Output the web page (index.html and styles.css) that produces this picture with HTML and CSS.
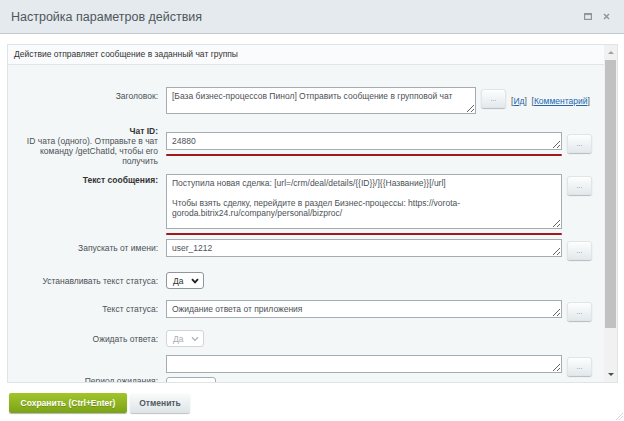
FILE: index.html
```html
<!DOCTYPE html>
<html lang="ru">
<head>
    <meta charset="UTF-8">
    <meta name="viewport" content="width=device-width, initial-scale=1.0">
    <title>Настройка параметров действия</title>
    <link rel="stylesheet" href="styles.css">
</head>
<body>
    <div class="dialog">
        <div class="titlebar">
            <span class="title">Настройка параметров действия</span>
            <span class="tools">
                <svg width="8" height="7" viewBox="0 0 8 7"><rect x="0.6" y="0.6" width="6.8" height="5.8" fill="none" stroke="#8c959b" stroke-width="1.2"/><line x1="0.6" y1="1.6" x2="7.4" y2="1.6" stroke="#8c959b" stroke-width="1"/></svg>
                <svg width="7" height="7" viewBox="0 0 7 7"><path d="M1 1 L6 6 M6 1 L1 6" stroke="#8c959b" stroke-width="1.4"/></svg>
            </span>
        </div>

        <div class="dialog-body">
            <div class="panel">
                <div class="panel-scroll">
                    <div class="panel-head">Действие отправляет сообщение в заданный чат группы</div>
                    <div class="form">
                        <div class="row">
                            <div class="label">Заголовок:</div>
                            <div class="field">
                                <textarea class="input input-title">[База бизнес-процессов Пинол] Отправить сообщение в групповой чат</textarea>
                                <button class="dots-btn">...</button>
                                <span class="links">[<a href="#">Ид</a>] &nbsp;[<a href="#">Комментарий</a>]</span>
                            </div>
                        </div>

                        <div class="row row-center">
                            <div class="label"><b>Чат ID:</b><br>ID чата (одного). Отправьте в чат команду /getChatId, чтобы его получить</div>
                            <div class="field">
                                <div class="marked">
                                    <textarea class="input">24880</textarea>
                                    <div class="redline"></div>
                                </div>
                                <button class="dots-btn">...</button>
                            </div>
                        </div>

                        <div class="row">
                            <div class="label label-top"><b>Текст сообщения:</b></div>
                            <div class="field">
                                <div class="marked">
                                    <textarea class="input input-big">Поступила новая сделка: [url=/crm/deal/details/{{ID}}/]{{Название}}[/url]

Чтобы взять сделку, перейдите в раздел Бизнес-процессы: https://vorota-goroda.bitrix24.ru/company/personal/bizproc/</textarea>
                                    <div class="redline"></div>
                                </div>
                                <button class="dots-btn">...</button>
                            </div>
                        </div>

                        <div class="row row-tight">
                            <div class="label">Запускать от имени:</div>
                            <div class="field">
                                <textarea class="input">user_1212</textarea>
                                <button class="dots-btn">...</button>
                            </div>
                        </div>

                        <div class="row row-select">
                            <div class="label">Устанавливать текст статуса:</div>
                            <div class="field">
                                <div class="select">Да
                                    <svg width="8" height="6" viewBox="0 0 8 6"><path d="M1 1.2 L4 4.4 L7 1.2" fill="none" stroke="#222" stroke-width="1.9"/></svg>
                                </div>
                            </div>
                        </div>

                        <div class="row row-loose">
                            <div class="label">Текст статуса:</div>
                            <div class="field">
                                <textarea class="input">Ожидание ответа от приложения</textarea>
                                <button class="dots-btn">...</button>
                            </div>
                        </div>

                        <div class="row row-select-2">
                            <div class="label">Ожидать ответа:</div>
                            <div class="field">
                                <div class="select disabled">Да
                                    <svg width="8" height="6" viewBox="0 0 8 6"><path d="M1 1.2 L4 4.4 L7 1.2" fill="none" stroke="#a9b3bb" stroke-width="1.3"/></svg>
                                </div>
                            </div>
                        </div>

                        <div class="row">
                            <div class="label label-low">Период ожидания:</div>
                            <div class="field field-stack">
                                <div class="field">
                                    <textarea class="input"></textarea>
                                    <button class="dots-btn">...</button>
                                </div>
                                <div class="small-input"></div>
                            </div>
                        </div>
                    </div>
                </div>
                <div class="scrollbar">
                    <div class="sb-btn"><span class="arrow-up"></span></div>
                    <div class="sb-thumb"></div>
                    <div class="sb-track"></div>
                    <div class="sb-btn"><span class="arrow-down"></span></div>
                </div>
            </div>
        </div>

        <div class="footer">
            <button class="btn-save">Сохранить (Ctrl+Enter)</button>
            <button class="btn-cancel">Отменить</button>
        </div>

        <svg class="grip" width="8" height="8" viewBox="0 0 8 8"><path d="M8 1 L1 8 M8 4 L4 8" stroke="#d3d8db" stroke-width="1"/></svg>
    </div>
</body>
</html>
```

FILE: styles.css
```css
body {
    margin: 0;
    padding: 0;
    font-family: "Liberation Sans", Arial, sans-serif;
    background-color: #fff;
}

.dialog {
    position: relative;
    width: 624px;
    height: 421px;
    overflow: hidden;
}

.titlebar {
    height: 33px;
    background-color: #e4eaed;
    border-bottom: 1px solid #c3cacd;
    display: flex;
    align-items: center;
    padding: 0 14px 0 11px;
}

.title {
    flex: 1;
    font-size: 12.5px;
    color: #4f565c;
}

.tools {
    display: flex;
    align-items: center;
    gap: 11px;
}

.dialog-body {
    padding: 10px 6px 0 7px;
}

.panel {
    box-sizing: border-box;
    height: 339px;
    border: 1px solid #dfe4e7;
    background-color: #f4f7f8;
    display: flex;
}

.panel-scroll {
    flex: 1;
    overflow: hidden;
}

.panel-head {
    height: 19px;
    line-height: 19px;
    padding-left: 6px;
    font-size: 8.5px;
    color: #333;
    background-color: #fafbfc;
    border-bottom: 1px solid #e1e6e9;
}

.form {
    padding-top: 18px;
}

.row {
    display: grid;
    grid-template-columns: 150px auto;
    column-gap: 8px;
    align-items: start;
    padding: 4px 0;
}

.row-center {
    align-items: center;
}

.row-tight {
    padding-top: 0;
}

.row-select {
    padding-top: 8px;
}

.row-loose {
    padding-top: 7px;
}

.row-select-2 {
    padding-top: 5px;
}

.label {
    text-align: right;
    font-size: 8.5px;
    line-height: 10px;
    color: #4b5156;
    padding-top: 4px;
}

.label b {
    color: #333;
}

.label-top {
    padding-top: 1px;
}

.label-low {
    padding-top: 21px;
}

.field {
    display: flex;
    align-items: flex-start;
    gap: 5px;
}

.field-stack {
    flex-direction: column;
    gap: 1px;
}

.marked {
    display: flex;
    flex-direction: column;
}

.input {
    box-sizing: border-box;
    width: 396px;
    height: 18px;
    margin: 0;
    padding: 3px 5px;
    border: 1px solid #a6adb2;
    border-radius: 0;
    background-color: #fff;
    font-family: "Liberation Sans", Arial, sans-serif;
    font-size: 8.5px;
    line-height: 10px;
    color: #4b5156;
    resize: vertical;
    overflow: hidden;
}

.input-title {
    width: 310px;
    height: 27px;
}

.input-big {
    height: 55px;
}

.redline {
    height: 2px;
    margin-top: 4px;
    background-color: #a3181c;
    border-radius: 1px;
}

.dots-btn {
    width: 25px;
    height: 19px;
    margin-top: 2px;
    padding: 0;
    border: none;
    border-radius: 3px;
    background: linear-gradient(#ffffff, #e1e8eb);
    box-shadow: 0 1px 1px rgba(0, 0, 0, 0.25), inset 0 0 0 1px #dfe5e8;
    font-size: 7px;
    color: #888;
    cursor: pointer;
}

.links {
    margin-top: 9px;
    font-size: 8.5px;
    color: #4b5156;
    white-space: nowrap;
}

.links a {
    color: #2067b0;
}

.select {
    box-sizing: border-box;
    width: 38px;
    height: 17px;
    padding: 0 4px 0 6px;
    border: 1px solid #8f979d;
    border-radius: 3px;
    background-color: #fff;
    display: flex;
    align-items: center;
    justify-content: space-between;
    font-size: 8.5px;
    color: #333;
}

.select.disabled {
    border-color: #cfd5d8;
    color: #a7aeb3;
}

.small-input {
    box-sizing: border-box;
    width: 50px;
    height: 20px;
    border: 1px solid #a6adb2;
    border-radius: 3px;
    background-color: #fff;
}

.scrollbar {
    width: 13px;
    background-color: #f1f1f1;
    display: flex;
    flex-direction: column;
}

.sb-btn {
    height: 15px;
    display: flex;
    align-items: center;
    justify-content: center;
}

.arrow-up {
    border-left: 3px solid transparent;
    border-right: 3px solid transparent;
    border-bottom: 3px solid #a3a3a3;
}

.arrow-down {
    border-left: 3px solid transparent;
    border-right: 3px solid transparent;
    border-top: 3px solid #505050;
}

.sb-thumb {
    height: 268px;
    margin: 0 1px;
    background-color: #c1c1c1;
}

.sb-track {
    flex: 1;
}

.footer {
    display: flex;
    gap: 3px;
    padding: 10px 0 0 9px;
}

.btn-save {
    width: 118px;
    height: 20px;
    padding: 0;
    border: none;
    border-radius: 2px;
    background: linear-gradient(#a2c52a, #7ba317);
    box-shadow: 0 1px 1px rgba(0, 0, 0, 0.3);
    font-family: "Liberation Sans", Arial, sans-serif;
    font-size: 8.5px;
    font-weight: bold;
    color: #fff;
    text-shadow: 0 1px 0 rgba(0, 0, 0, 0.2);
    cursor: pointer;
}

.btn-cancel {
    width: 60px;
    height: 20px;
    padding: 0;
    border: none;
    border-radius: 2px;
    background: linear-gradient(#fbfcfc, #dde4e7);
    box-shadow: 0 1px 1px rgba(0, 0, 0, 0.25);
    font-family: "Liberation Sans", Arial, sans-serif;
    font-size: 8.5px;
    font-weight: bold;
    color: #535a5f;
    cursor: pointer;
}

.grip {
    position: absolute;
    right: 1px;
    bottom: 1px;
}
```
